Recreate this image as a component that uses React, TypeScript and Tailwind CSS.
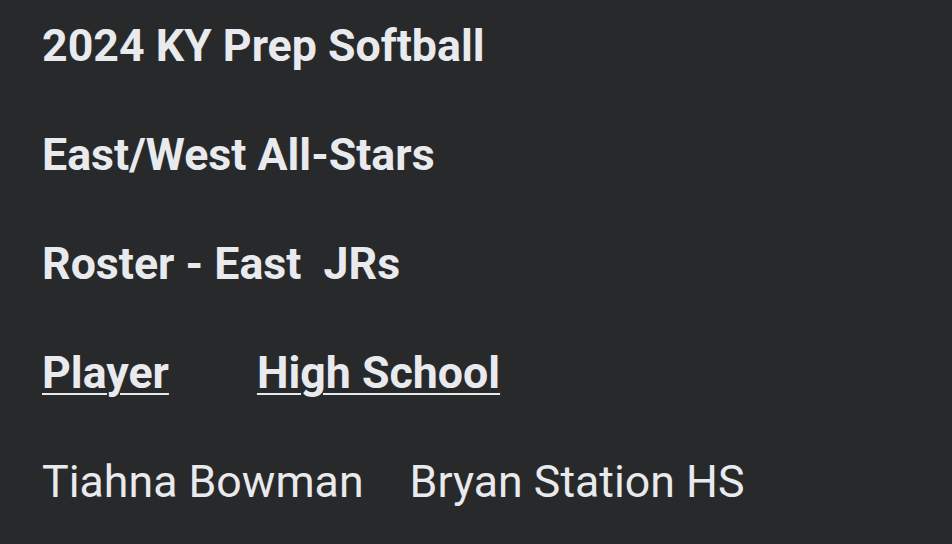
export default function App() {
  return (
    <div
      className="w-[952px] h-[544px] overflow-hidden bg-[#28292b] text-[#e8eaed] px-[42px] pt-[21px] flex flex-col gap-[59px] text-[44.7px] leading-[50px]"
      style={{ fontFamily: "Roboto, 'Noto Sans', sans-serif" }}
    >
      <p className="font-bold">2024 KY Prep Softball</p>
      <p className="font-bold">East/West All-Stars</p>
      <p className="font-bold whitespace-pre">Roster - East  JRs</p>
      <p className="font-bold flex">
        <span className="underline decoration-2 underline-offset-[5px]">Player</span>
        <span className="ml-[88px] underline decoration-2 underline-offset-[5px]">High School</span>
      </p>
      <p className="flex">
        <span>Tiahna Bowman</span>
        <span className="ml-[46px]">Bryan Station HS</span>
      </p>
    </div>
  );
}
